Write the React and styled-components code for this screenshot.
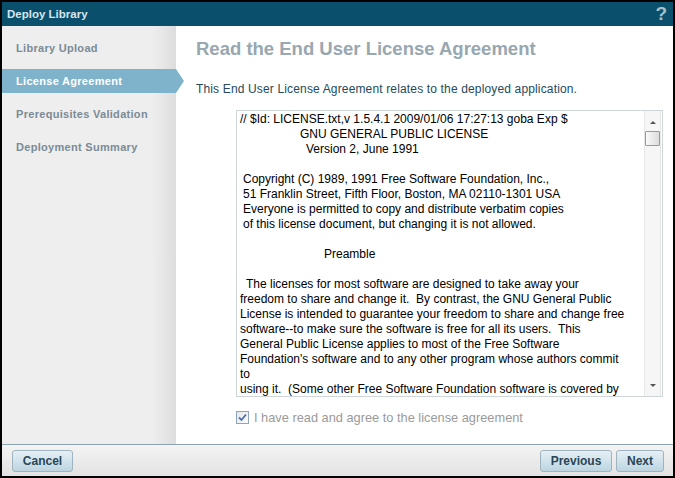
import React from "react";
import styled, { createGlobalStyle } from "styled-components";

const Global = createGlobalStyle`
  html, body { margin: 0; padding: 0; background: #fff; }
  body { font-family: "Liberation Sans", Arial, sans-serif; }
  * { box-sizing: border-box; }
`;

const Window = styled.div`
  width: 675px;
  height: 478px;
  border: 2px solid #000;
  display: flex;
  flex-direction: column;
  background: #fff;
  overflow: hidden;
`;

const TitleBar = styled.div`
  height: 24px;
  flex: none;
  background: #0a506c;
  display: flex;
  align-items: center;
  justify-content: space-between;
  padding: 0 6px 0 5px;
`;

const Title = styled.div`
  color: #d6e6ee;
  font-weight: bold;
  font-size: 11.5px;
`;

const Help = styled.div`
  color: #a8bec9;
  font-weight: bold;
  font-size: 19px;
  line-height: 20px;
`;

const Body = styled.div`
  flex: 1;
  display: flex;
  min-height: 0;
`;

const Sidebar = styled.div`
  width: 174px;
  flex: none;
  background: linear-gradient(to right, #eeeeee 0, #eeeeee 150px, #dddddd 174px);
  padding-top: 10px;
  display: flex;
  flex-direction: column;
  gap: 9px;
`;

const NavItem = styled.div`
  position: relative;
  height: 24px;
  display: flex;
  align-items: center;
  padding-left: 14px;
  font-size: 11px;
  letter-spacing: 0.3px;
  font-weight: bold;
  color: ${(p) => (p.$active ? "#ffffff" : "#7b8b95")};
  background: ${(p) => (p.$active ? "#7fb3cb" : "transparent")};
  z-index: 1;
  ${(p) =>
    p.$active &&
    `
    &::after {
      content: "";
      position: absolute;
      right: -8px;
      top: 0;
      border-top: 12px solid transparent;
      border-bottom: 12px solid transparent;
      border-left: 8px solid #7fb3cb;
    }
  `}
`;

const Content = styled.div`
  flex: 1;
  padding: 12px 10px 0 20px;
  display: flex;
  flex-direction: column;
`;

const Heading = styled.h1`
  margin: 0;
  font-size: 18.5px;
  line-height: 22px;
  font-weight: bold;
  color: #98a7b0;
`;

const Subtitle = styled.p`
  margin: 22px 0 0;
  font-size: 12px;
  letter-spacing: 0.15px;
  line-height: 14px;
  color: #234a5c;
`;

const LicenseBox = styled.div`
  margin: 14px 0 0 40px;
  height: 287px;
  border: 1px solid #cfd6da;
  display: flex;
  overflow: hidden;
`;

const LicenseText = styled.div`
  flex: 1;
  padding: 1px 0 0 3px;
  font-size: 12px;
  line-height: 15px;
  color: #000;
  overflow: hidden;
`;

const Line = styled.div`
  white-space: pre;
  height: 15px;
  padding-left: ${(p) => p.$indent || 0}px;
`;

const Scrollbar = styled.div`
  width: 17px;
  flex: none;
  margin-right: 1px;
  border-left: 1px solid #e6e6e6;
  border-right: 1px solid #e6e6e6;
  background: #f6f6f6;
  display: flex;
  flex-direction: column;
  align-items: center;
`;

const Arrow = styled.div`
  width: 0;
  height: 0;
  border-left: 3px solid transparent;
  border-right: 3px solid transparent;
  ${(p) =>
    p.$down
      ? "border-top: 3px solid #555; margin-top: auto; margin-bottom: 9px;"
      : "border-bottom: 3px solid #555; margin-top: 10px;"}
`;

const Thumb = styled.div`
  width: 15px;
  height: 15px;
  margin-top: 7px;
  border: 1px solid #9a9a9a;
  border-radius: 1px;
  background: linear-gradient(to right, #fafafa, #dcdcdc);
`;

const AgreeRow = styled.label`
  margin: 13px 0 0 40px;
  display: flex;
  align-items: center;
  gap: 5px;
  font-size: 12.8px;
  color: #9a9a9a;
`;

const CheckBox = styled.span`
  width: 13px;
  height: 13px;
  border: 1px solid #8ea4b8;
  background: linear-gradient(to bottom right, #e4e8ec, #fafbfc);
  display: flex;
  align-items: center;
  justify-content: center;
`;

const Footer = styled.div`
  height: 32px;
  flex: none;
  border-top: 1px solid #8ea3b0;
  background: linear-gradient(to bottom, #f4f4f4, #e2e2e2);
  display: flex;
  align-items: center;
  padding: 0 9px 0 10px;
  gap: 4px;
`;

const Spacer = styled.div`
  flex: 1;
`;

const Button = styled.button`
  height: 22px;
  width: ${(p) => p.$w}px;
  padding: 0;
  border: 1px solid #9fb4c0;
  border-radius: 3px;
  background: linear-gradient(to bottom, #e6f0f5, #bcd5e1);
  color: #2a4656;
  font-family: "Liberation Sans", Arial, sans-serif;
  font-weight: bold;
  font-size: 12px;
`;

const lines = [
  [0, "// $Id: LICENSE.txt,v 1.5.4.1 2009/01/06 17:27:13 goba Exp $"],
  [60, "GNU GENERAL PUBLIC LICENSE"],
  [66, "Version 2, June 1991"],
  [0, ""],
  [3, "Copyright (C) 1989, 1991 Free Software Foundation, Inc.,"],
  [3, "51 Franklin Street, Fifth Floor, Boston, MA 02110-1301 USA"],
  [3, "Everyone is permitted to copy and distribute verbatim copies"],
  [3, "of this license document, but changing it is not allowed."],
  [0, ""],
  [84, "Preamble"],
  [0, ""],
  [6, "The licenses for most software are designed to take away your"],
  [0, "freedom to share and change it.  By contrast, the GNU General Public"],
  [0, "License is intended to guarantee your freedom to share and change free"],
  [0, "software--to make sure the software is free for all its users.  This"],
  [0, "General Public License applies to most of the Free Software"],
  [0, "Foundation's software and to any other program whose authors commit"],
  [0, "to"],
  [0, "using it.  (Some other Free Software Foundation software is covered by"],
];

const nav = [
  "Library Upload",
  "License Agreement",
  "Prerequisites Validation",
  "Deployment Summary",
];

export default function App() {
  return (
    <>
      <Global />
      <Window>
        <TitleBar>
          <Title>Deploy Library</Title>
          <Help>?</Help>
        </TitleBar>
        <Body>
          <Sidebar>
            {nav.map((n) => (
              <NavItem key={n} $active={n === "License Agreement"}>
                {n}
              </NavItem>
            ))}
          </Sidebar>
          <Content>
            <Heading>Read the End User License Agreement</Heading>
            <Subtitle>
              This End User License Agreement relates to the deployed application.
            </Subtitle>
            <LicenseBox>
              <LicenseText>
                {lines.map(([ind, t], i) => (
                  <Line key={i} $indent={ind}>
                    {t}
                  </Line>
                ))}
              </LicenseText>
              <Scrollbar>
                <Arrow />
                <Thumb />
                <Arrow $down />
              </Scrollbar>
            </LicenseBox>
            <AgreeRow>
              <CheckBox>
                <svg width="9" height="9" viewBox="0 0 9 9">
                  <path
                    d="M1 4.5 L3.5 7 L8 1.5"
                    fill="none"
                    stroke="#4a6fa8"
                    strokeWidth="1.8"
                  />
                </svg>
              </CheckBox>
              I have read and agree to the license agreement
            </AgreeRow>
          </Content>
        </Body>
        <Footer>
          <Button $w={61}>Cancel</Button>
          <Spacer />
          <Button $w={72}>Previous</Button>
          <Button $w={48}>Next</Button>
        </Footer>
      </Window>
    </>
  );
}
